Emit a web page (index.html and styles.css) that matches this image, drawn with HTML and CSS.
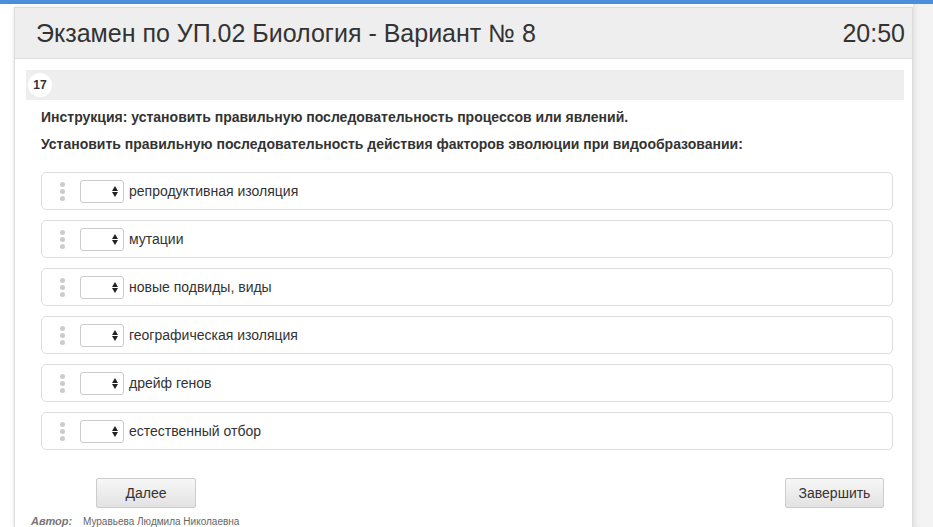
FILE: index.html
```html
<!DOCTYPE html>
<html lang="ru">
<head>
  <meta charset="UTF-8">
  <title>Экзамен по УП.02 Биология - Вариант № 8</title>
  <link rel="stylesheet" href="styles.css">
</head>
<body>
  <div class="top-line"></div>
  <div class="page">
    <div class="exam">
      <div class="exam-head">
        <span class="exam-title">Экзамен по УП.02 Биология - Вариант № 8</span>
        <span class="exam-timer">20:50</span>
      </div>

      <div class="exam-body">
        <div class="q-bar"><span class="q-num">17</span></div>

        <div class="q-text">
          <p>Инструкция: установить правильную последовательность процессов или явлений.</p>
          <p>Установить правильную последовательность действия факторов эволюции при видообразовании:</p>
        </div>

        <ul class="order-list">
          <li class="order-item">
            <span class="grip"><i></i><i></i><i></i></span>
            <span class="pick"></span>
            <span>репродуктивная изоляция</span>
          </li>
          <li class="order-item">
            <span class="grip"><i></i><i></i><i></i></span>
            <span class="pick"></span>
            <span>мутации</span>
          </li>
          <li class="order-item">
            <span class="grip"><i></i><i></i><i></i></span>
            <span class="pick"></span>
            <span>новые подвиды, виды</span>
          </li>
          <li class="order-item">
            <span class="grip"><i></i><i></i><i></i></span>
            <span class="pick"></span>
            <span>географическая изоляция</span>
          </li>
          <li class="order-item">
            <span class="grip"><i></i><i></i><i></i></span>
            <span class="pick"></span>
            <span>дрейф генов</span>
          </li>
          <li class="order-item">
            <span class="grip"><i></i><i></i><i></i></span>
            <span class="pick"></span>
            <span>естественный отбор</span>
          </li>
        </ul>

        <div class="actions">
          <button class="btn btn-next">Далее</button>
          <button class="btn btn-finish">Завершить</button>
        </div>

        <div class="author"><em>Автор:</em> Муравьева Людмила Николаевна</div>
      </div>
    </div>
    <div class="side"></div>
  </div>
</body>
</html>
```

FILE: styles.css
```css
body {
  margin: 0;
  background: #fff;
  font-family: "Liberation Sans", Arial, sans-serif;
  color: #333;
  overflow: hidden;
}

.top-line {
  height: 4px;
  background: #4a8fdc;
}

.page {
  display: flex;
  padding-top: 3px;
  padding-left: 14px;
}

.exam {
  width: 897px;
  border: 1px solid #ddd;
  border-bottom: none;
  box-shadow: 0 0 4px rgba(0, 0, 0, 0.12);
  background: #fff;
}

.side {
  flex: 1;
  margin-top: -3px;
  background: #f3f3f3;
  box-shadow: inset 4px 0 4px -2px rgba(0, 0, 0, 0.08);
}

.exam-head {
  display: flex;
  justify-content: space-between;
  align-items: center;
  height: 50px;
  padding: 0 7px 0 21px;
  background: #eee;
  border-bottom: 1px solid #ddd;
}

.exam-title,
.exam-timer {
  font-size: 25px;
  color: #333;
}

.exam-body {
  padding: 11px 8px 0 11px;
}

.q-bar {
  height: 30px;
  display: flex;
  align-items: center;
  padding-left: 2px;
  background: #eee;
}

.q-num {
  width: 24px;
  height: 24px;
  border-radius: 50%;
  background: #fff;
  display: flex;
  align-items: center;
  justify-content: center;
  font-size: 12px;
  font-weight: bold;
}

.q-text {
  padding: 10px 0 0 15px;
}

.q-text p {
  margin: 0 0 12px;
  font-size: 14px;
  font-weight: bold;
  line-height: 15px;
}

.order-list {
  list-style: none;
  margin: 20px 0 0 15px;
  padding: 0;
  width: 852px;
  display: flex;
  flex-direction: column;
  gap: 10px;
}

.order-item {
  height: 36px;
  display: flex;
  align-items: center;
  border: 1px solid #ddd;
  border-radius: 5px;
  font-size: 14px;
}

.grip {
  display: flex;
  flex-direction: column;
  gap: 2px;
  margin: 0 15px 0 18px;
}

.grip i {
  width: 5px;
  height: 5px;
  border-radius: 50%;
  background: #ccc;
}

.pick {
  position: relative;
  width: 42px;
  height: 21px;
  border: 1px solid #ccc;
  border-radius: 3px;
  margin-right: 5px;
  background: #fff;
}

.pick::before,
.pick::after {
  content: "";
  position: absolute;
  right: 5px;
  border-left: 3px solid transparent;
  border-right: 3px solid transparent;
}

.pick::before {
  top: 5px;
  border-bottom: 5px solid #222;
}

.pick::after {
  top: 11px;
  border-top: 5px solid #222;
}

.actions {
  display: flex;
  justify-content: space-between;
  margin: 28px 20px 0 70px;
}

.btn {
  height: 30px;
  border: 1px solid #ccc;
  border-radius: 2px;
  background: linear-gradient(#f7f7f7, #e2e2e2);
  font-family: "Liberation Sans", Arial, sans-serif;
  font-size: 14px;
  color: #333;
}

.btn-next {
  width: 100px;
}

.btn-finish {
  width: 99px;
}

.author {
  margin: 7px 0 0 5px;
  font-size: 10px;
  color: #666;
}

.author em {
  font-size: 11px;
  font-weight: bold;
  color: #777;
  margin-right: 8px;
}
```
